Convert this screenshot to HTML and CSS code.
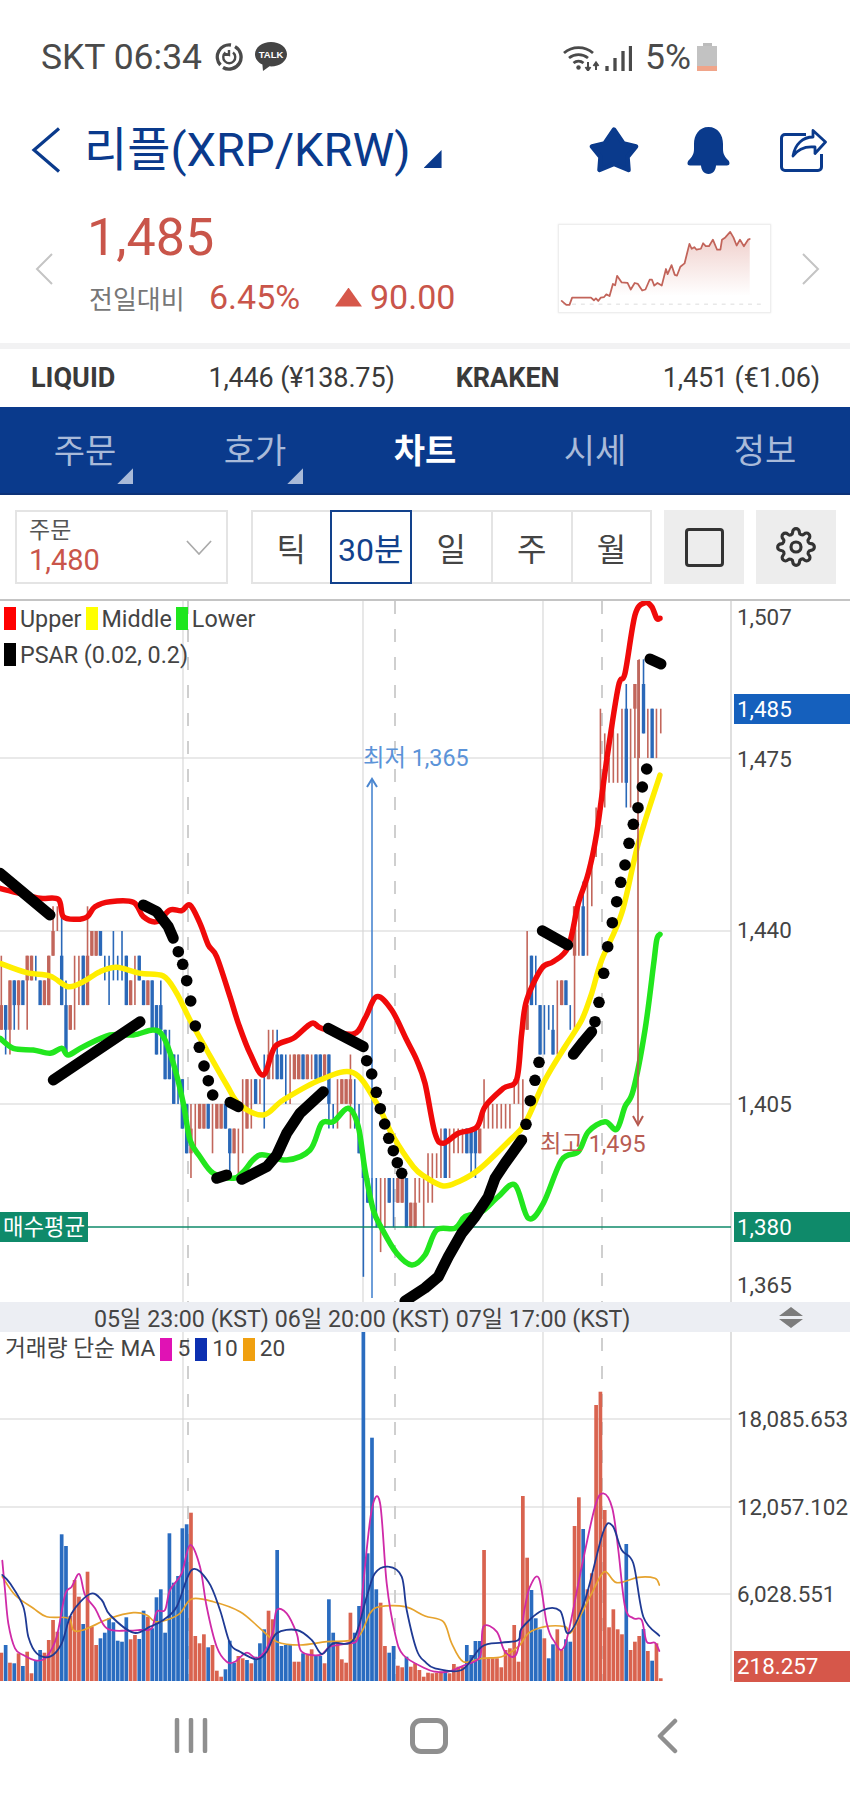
FILE: index.html
```html
<!DOCTYPE html>
<html lang="ko">
<head>
<meta charset="utf-8">
<title>리플(XRP/KRW)</title>
<link rel="stylesheet" href="styles.css">
</head>
<body>
<div class="status">
  <span class="status-text">SKT 06:34</span>
  <svg class="ic-sync" viewBox="0 0 28 28"><path d="M5.500 22A12 12 0 0 1 16 2M20 3.600A12 12 0 0 1 8 24.500M24 19.500" fill="none" stroke="#4a4a4a" stroke-width="3.400"/><path d="M10.500 9.500a6 6 0 1 0 7.500 0M9 10.500l5 1.500V7" fill="none" stroke="#4a4a4a" stroke-width="2.400"/></svg>
  <svg class="ic-talk" viewBox="0 0 32 30"><path d="M16 0C7.200 0 0 5.400 0 12.200c0 4.400 3 8.200 7.400 10.300L8 29l6.500-4.700c.5 0 1 .1 1.500.1 8.800 0 16-5.400 16-12.200S24.800 0 16 0z" fill="#444"/><text x="16" y="16" class="talk-text">TALK</text></svg>
  <span class="status-right">
    <svg class="ic-wifi" viewBox="0 0 38 27"><path d="M1 9a22 22 0 0 1 29 0M6 14a15 15 0 0 1 19 0M10.500 19a8 8 0 0 1 10 0" fill="none" stroke="#4a4a4a" stroke-width="2.800"/><circle cx="15.500" cy="23.500" r="2.200" fill="#4a4a4a"/><path d="M25 18v8M22.500 23l2.500 3.500 2.500-3.500M33 26v-7M30.500 22l2.500-3.500 2.500 3.500" fill="none" stroke="#4a4a4a" stroke-width="2"/></svg>
    <svg class="ic-signal" viewBox="0 0 27 26"><path d="M2 26v-5M10 26V13M18 26V6M25.500 26V1" stroke="#4a4a4a" stroke-width="3.300"/></svg>
    <span class="status-text">5%</span>
    <span class="battery"><span class="battery-cap"></span><span class="battery-body"><span class="battery-low"></span></span></span>
  </span>
</div>

<header class="head">
  <svg class="ic-back" viewBox="0 0 30 46"><path d="M28 1.500 3 23l25 21.500" fill="none" stroke="#0a3a8c" stroke-width="3.200"/></svg>
  <h1 class="title">리플(XRP/KRW)</h1>
  <span class="title-tri"></span>
  <span class="head-icons">
    <svg class="ic-star" viewBox="0 0 50 48"><path d="M25 3.500 34.500 17.500 47 20.500 38.500 31 39.500 44 25 38 10.500 44 11.500 31 3 20.500 15.500 17.500z" fill="#0a3a8c" stroke="#0a3a8c" stroke-width="4.500" stroke-linejoin="round"/></svg>
    <svg class="ic-bell" viewBox="0 0 43 47"><path d="M21.500 0C12 0 7 8 7 17v5c0 5-2 8-5.500 11.500C0 35.500 0 38.500 3 38.500h37c3 0 3-3 1.500-5C38 30 36 27 36 22v-5C36 8 31 0 21.500 0z" fill="#0a3a8c"/><path d="M14 38h15c0 5-3 9-7.500 9S14 43 14 38z" fill="#0a3a8c"/></svg>
    <svg class="ic-share" viewBox="0 0 47 43"><path d="M26 5.500H5A3.500 3.500 0 0 0 1.500 9v29A3.500 3.500 0 0 0 5 41.500h33a3.500 3.500 0 0 0 3.500-3.500V25" fill="none" stroke="#0a3a8c" stroke-width="3"/><path d="M13 27C15 15 23 8 33 8V1.500L45.500 13 35 24.500V18C26 17 18 20 13 27z" fill="#fff" stroke="#0a3a8c" stroke-width="2.800" stroke-linejoin="round"/></svg>
  </span>
</header>

<section class="quote">
  <svg class="ic-chev" viewBox="0 0 18 32"><path d="M17 1 2 16l15 15" fill="none" stroke="#c4c4c4" stroke-width="2"/></svg>
  <div class="quote-main">
    <div class="price">1,485</div>
    <div class="change">
      <span class="change-label">전일대비</span>
      <span class="change-pct">6.45%</span>
      <span class="change-tri"></span>
      <span class="change-val">90.00</span>
    </div>
  </div>
  <svg class="spark" viewBox="0 0 213 89">
    <defs><linearGradient id="sparkfill" x1="0" y1="0" x2="0" y2="1"><stop offset="0" stop-color="#d9887e" stop-opacity=".42"/><stop offset="1" stop-color="#d9887e" stop-opacity="0"/></linearGradient></defs>
    <g id="spark"></g>
  </svg>
  <svg class="ic-chev" viewBox="0 0 18 32"><path d="M1 1l15 15L1 31" fill="none" stroke="#c4c4c4" stroke-width="2"/></svg>
</section>

<section class="exchanges">
  <b class="ex-name ex-liquid">LIQUID</b>
  <span class="ex-val ex-val1">1,446 (¥138.75)</span>
  <b class="ex-name ex-kraken">KRAKEN</b>
  <span class="ex-val ex-val2">1,451 (€1.06)</span>
</section>

<nav class="tabs">
  <span class="tab"><span class="tab-label">주문<i class="tab-tri"></i></span></span>
  <span class="tab"><span class="tab-label">호가<i class="tab-tri"></i></span></span>
  <span class="tab tab-on"><span class="tab-label">차트</span></span>
  <span class="tab"><span class="tab-label">시세</span></span>
  <span class="tab"><span class="tab-label">정보</span></span>
</nav>

<section class="toolbar">
  <div class="select">
    <div class="select-text"><span class="select-name">주문</span><span class="select-price">1,480</span></div>
    <svg class="ic-down" viewBox="0 0 28 16"><path d="M1 1l13 14L27 1" fill="none" stroke="#aaa" stroke-width="1.800"/></svg>
  </div>
  <div class="segments">
    <span class="seg seg-tick">틱</span>
    <span class="seg seg-on">30분</span>
    <span class="seg">일</span>
    <span class="seg">주</span>
    <span class="seg seg-last">월</span>
  </div>
  <span class="tool-btn"><span class="square"></span></span>
  <span class="tool-btn">
    <svg class="ic-gear" viewBox="0 0 24 24" fill="none" stroke="#333" stroke-width="1.900"><circle cx="12" cy="12" r="3"/><path d="M19.400 15a1.650 1.650 0 0 0 .33 1.820l.06.06a2 2 0 0 1 0 2.830 2 2 0 0 1-2.830 0l-.06-.06a1.650 1.650 0 0 0-1.820-.33 1.650 1.650 0 0 0-1 1.510V21a2 2 0 0 1-2 2 2 2 0 0 1-2-2v-.09A1.650 1.650 0 0 0 9 19.400a1.650 1.650 0 0 0-1.820.33l-.06.06a2 2 0 0 1-2.830 0 2 2 0 0 1 0-2.830l.06-.06a1.650 1.650 0 0 0 .33-1.820 1.650 1.650 0 0 0-1.510-1H3a2 2 0 0 1-2-2 2 2 0 0 1 2-2h.09A1.650 1.650 0 0 0 4.600 9a1.650 1.650 0 0 0-.33-1.820l-.06-.06a2 2 0 0 1 0-2.830 2 2 0 0 1 2.830 0l.06.06a1.650 1.650 0 0 0 1.820.33H9a1.650 1.650 0 0 0 1-1.510V3a2 2 0 0 1 2-2 2 2 0 0 1 2 2v.09a1.650 1.650 0 0 0 1 1.510 1.650 1.650 0 0 0 1.820-.33l.06-.06a2 2 0 0 1 2.830 0 2 2 0 0 1 0 2.830l-.06.06a1.650 1.650 0 0 0-.33 1.820V9a1.650 1.650 0 0 0 1.510 1H21a2 2 0 0 1 2 2 2 2 0 0 1-2 2h-.09a1.650 1.650 0 0 0-1.510 1z"/></svg>
  </span>
</section>

<section class="panel panel-main">
  <div class="legend">
    <div class="legend-row"><i class="sw sw-red"></i>Upper<i class="sw sw-yellow"></i>Middle<i class="sw sw-green"></i>Lower</div>
    <div class="legend-row"><i class="sw sw-black"></i>PSAR (0.02, 0.2)</div>
  </div>
  <svg id="main" class="chart-main" viewBox="0 601 850 701">
    <g id="main-grid"></g>
    <g id="candles"></g>
    <g id="low-arrow"><path d="M372 1298V779" stroke="#4a86d0" stroke-width="1.600" fill="none"/><path d="M367 787l5-8 5 8" stroke="#4a86d0" stroke-width="2" fill="none"/></g>
    <path d="M88 1227H731" stroke="#0f8a6a" stroke-width="1.500"/>
    <g id="bands"></g>
    <path d="M638 660V1124" stroke="#b5584e" stroke-width="1.600" fill="none"/><path d="M633 1116l5 9 5-9" stroke="#b5584e" stroke-width="2" fill="none"/>
    <g id="psar"></g>
    <rect x="734" y="694" width="116" height="30" fill="#1560bd"/>
    <rect x="734" y="1212" width="116" height="30" fill="#0f8a6a"/>
    <rect x="0" y="1212" width="88" height="30" fill="#0f8a6a"/>
    <text class="ax" x="737" y="625">1,507</text>
    <text class="ax ax-w" x="737" y="717">1,485</text>
    <text class="ax" x="737" y="767">1,475</text>
    <text class="ax" x="737" y="938">1,440</text>
    <text class="ax" x="737" y="1112">1,405</text>
    <text class="ax ax-w" x="737" y="1235">1,380</text>
    <text class="ax" x="737" y="1293">1,365</text>
    <text class="avg" x="3" y="1235">매수평균</text>
    <text class="note note-low" x="363" y="766">최저 1,365</text>
    <text class="note note-high" x="540" y="1152">최고 1,495</text>
  </svg>
</section>

<div class="timebar">
  <span class="time">05일 23:00 (KST)</span>
  <span class="time">06일 20:00 (KST)</span>
  <span class="time">07일 17:00 (KST)</span>
  <svg class="ic-updown" viewBox="0 0 24 21"><path d="M12 0l12 9H0zM12 21L0 12h24z" fill="#7c7c7c"/></svg>
</div>

<section class="panel panel-vol">
  <div class="vol-legend">거래량 단순 MA<i class="sw sw-mag"></i>5<i class="sw sw-navy"></i>10<i class="sw sw-orange"></i>20</div>
  <svg id="vol" class="chart-vol" viewBox="0 1332 850 350">
    <g id="vol-grid"></g>
    <g id="bars"></g>
    <g id="vol-lines"></g>
    <rect x="734" y="1651" width="116" height="31" fill="#d6574a"/>
    <text class="ax" x="737" y="1427">18,085.653</text>
    <text class="ax" x="737" y="1515">12,057.102</text>
    <text class="ax" x="737" y="1602">6,028.551</text>
    <text class="ax ax-w" x="737" y="1674">218.257</text>
  </svg>
</section>

<footer class="navbar">
  <svg class="nav-recent" viewBox="0 0 34 35"><path d="M3 2v31M17 2v31M31 2v31" stroke="#8f8f8f" stroke-width="4.500" stroke-linecap="round"/></svg>
  <span class="nav-home"></span>
  <svg class="nav-back" viewBox="0 0 22 36"><path d="M19 3 4 18l15 15" fill="none" stroke="#8f8f8f" stroke-width="4.500" stroke-linecap="round" stroke-linejoin="round"/></svg>
</footer>
<script src="chart.js"></script>
</body>
</html>
```
FILE: styles.css
```css
* { box-sizing: border-box; }
html, body { margin: 0; padding: 0; background: #fff; }
body { width: 850px; height: 1795px; overflow: hidden; font-family: Roboto, "Noto Sans CJK KR", sans-serif; color: #444; }
i { display: block; font-style: normal; }

.status { height: 114px; display: flex; align-items: center; padding: 0 20px 0 41px; color: #4a4a4a; }
.status-text { font-size: 35.500px; line-height: 40px; }
.ic-sync { width: 28px; height: 28px; margin-left: 13px; }
.ic-talk { width: 32px; height: 30px; margin-left: 12px; }
.talk-text { font: 700 9.500px "Liberation Sans", sans-serif; fill: #fff; text-anchor: middle; }
.status-right { margin-left: auto; display: flex; align-items: center; padding-right: 113px; }
.ic-wifi { width: 38px; height: 27px; }
.ic-signal { width: 27px; height: 26px; margin: 2px 13px 0 4px; }
.battery { width: 20px; height: 28px; margin-left: 6px; display: flex; flex-direction: column; align-items: center; }
.battery-cap { width: 9px; height: 3px; background: #bcbcbc; }
.battery-body { width: 20px; flex: 1; background: #c2c2c2; display: flex; align-items: flex-end; }
.battery-low { width: 100%; height: 5px; background: #f0a58a; }

.head { height: 72px; display: flex; align-items: center; padding-left: 31px; position: relative; }
.ic-back { width: 30px; height: 46px; }
.title { margin: 0 0 0 23px; font-size: 47px; line-height: 50px; font-weight: 400; color: #0a3a8c; }
.title-tri { width: 18px; height: 18px; margin: 18px 0 0 13px; background: #0a3a8c; clip-path: polygon(100% 0, 100% 100%, 0 100%); }
.head-icons { margin-left: auto; display: flex; align-items: center; padding-right: 23px; }
.ic-star { width: 50px; height: 48px; }
.ic-bell { width: 43px; height: 47px; margin-left: 48px; }
.ic-share { width: 47px; height: 43px; margin-left: 50px; }

.quote { height: 157px; display: flex; align-items: flex-start; padding: 21px 30px 0 35px; position: relative; }
.quote .ic-chev { width: 18px; height: 32px; margin-top: 46px; flex: none; }
.quote-main { width: 505px; padding-left: 34px; flex: none; }
.price { font-size: 52px; line-height: 62px; color: #c9554a; }
.change { display: flex; align-items: center; height: 40px; margin: 8px 0 0 2px; }
.change-label { font-size: 26px; color: #777; width: 120px; }
.change-pct { font-size: 34px; color: #c9554a; width: 126px; }
.change-tri { width: 27px; height: 19px; background: #d6574a; clip-path: polygon(50% 0, 100% 100%, 0 100%); }
.change-val { font-size: 34px; color: #c9554a; margin-left: 8px; }
.spark { width: 213px; height: 89px; margin: 17px 31px 0 0; border: 1px solid #eee; box-shadow: 0 0 2px #e8e8e8; flex: none; }

.exchanges { height: 64px; border-top: 6px solid #f2f2f3; display: flex; align-items: center; font-size: 27px; color: #3a3a3a; }
.ex-name { font-weight: 700; }
.ex-liquid { margin-left: 31px; }
.ex-val { letter-spacing: -.15px; }
.ex-val1 { margin-left: 93px; }
.ex-kraken { margin-left: 61px; }
.ex-val2 { margin-left: auto; margin-right: 30px; }

.tabs { height: 88px; padding-top: 2px; background: #0a3a8c; display: grid; grid-template-columns: repeat(5, 170px); align-items: center; border-bottom: 2px solid #0c3278; }
.tab { text-align: center; font-size: 34px; color: #a9bad9; }
.tab-label { position: relative; display: inline-block; line-height: 44px; }
.tab-on { color: #fff; font-weight: 700; }
.tab-tri { position: absolute; right: -17px; bottom: -11px; width: 16px; height: 16px; background: #a9bad9; clip-path: polygon(100% 0, 100% 100%, 0 100%); }

.toolbar { height: 104px; padding: 15px 14px; display: flex; }
.select { width: 213px; height: 74px; margin-left: 1px; border: 2px solid #e4e4e4; display: flex; align-items: center; justify-content: space-between; padding: 0 14px 0 12px; }
.select-text { display: flex; flex-direction: column; }
.select-name { font-size: 23px; line-height: 26px; color: #555; }
.select-price { font-size: 29px; line-height: 33px; color: #c9554a; }
.ic-down { width: 26px; height: 15px; }
.segments { width: 402px; height: 74px; margin-left: 23px; border: 2px solid #e4e4e4; display: grid; grid-template-columns: 77px 82px 79px 80px 1fr; font-size: 32px; }
.seg { display: flex; align-items: center; justify-content: center; border-left: 2px solid #e4e4e4; color: #444; white-space: nowrap; }
.seg-tick { border-left: 0; }
.seg-on { margin: -2px 0; border: 2px solid #12418c; color: #12418c; }
.seg-on + .seg { border-left: 0; }
.tool-btn { width: 80px; height: 74px; margin-left: 12px; background: #ededed; display: flex; align-items: center; justify-content: center; }
.square { width: 39px; height: 39px; border: 3px solid #333; border-radius: 4px; }
.ic-gear { width: 40px; height: 40px; }

.panel { position: relative; }
.panel-main { border-top: 2px solid #c4c4c4; height: 703px; }
.chart-main { display: block; width: 850px; height: 701px; }
.legend { position: absolute; left: 4px; top: 6px; font-size: 23.300px; line-height: 24px; color: #444; }
.legend-row { display: flex; height: 36px; align-items: flex-start; }
.sw { width: 12px; height: 23px; margin-right: 4px; }
.sw-red { background: #f00; }
.sw-yellow { background: #ff0; margin-left: 4px; }
.sw-green { background: #1ee61e; margin-left: 4px; }
.sw-black { background: #000; }
.ax { font: 22.400px Roboto, sans-serif; fill: #444; }
.ax-w { fill: #fff; }
.avg { font: 22.300px "Noto Sans CJK KR", sans-serif; fill: #fff; }
.note { font: 23.300px Roboto, "Noto Sans CJK KR", sans-serif; }
.note-low { fill: #5b93d8; }
.note-high { fill: #b85c52; }

.timebar { height: 30px; background: #eceef3; display: flex; align-items: center; padding: 0 47px 0 94px; font-size: 23.200px; color: #444; position: relative; }
.time { margin-right: 6px; white-space: nowrap; }
.ic-updown { width: 24px; height: 21px; margin-left: auto; }

.panel-vol { height: 350px; }
.chart-vol { display: block; width: 850px; height: 350px; }
.vol-legend { position: absolute; left: 5px; top: 5px; z-index: 1; display: flex; align-items: center; font-size: 22.700px; line-height: 24px; color: #444; white-space: nowrap; }
.vol-legend .sw { margin: 0 5px; width: 12px; }
.sw-mag { background: #e012b4; }
.sw-navy { background: #0c2fb0; }
.sw-orange { background: #f0a010; }

.navbar { height: 113px; display: flex; align-items: flex-start; padding-top: 36px; position: relative; }
.nav-recent { width: 34px; height: 35px; margin-left: 174px; }
.nav-home { width: 38px; height: 36px; margin-left: 202px; border: 5px solid #8f8f8f; border-radius: 11px; }
.nav-back { width: 22px; height: 36px; margin-left: 208px; }
```
FILE: chart.js
```js
const NS = "http://www.w3.org/2000/svg";
function add(parent, tag, attrs) {
  const el = document.createElementNS(NS, tag);
  for (const k in attrs) el.setAttribute(k, attrs[k]);
  document.getElementById(parent).appendChild(el);
  return el;
}
// Points traced in 3x crops: [x, y] pairs, mapped by crop origin.
function mapPts(flat, ox, oy) {
  const out = [];
  for (let i = 0; i < flat.length; i += 2) out.push([ox + flat[i] / 3, oy + flat[i + 1] / 3]);
  return out;
}
const ptsAttr = pts => pts.map(p => p[0].toFixed(1) + "," + p[1].toFixed(1)).join(" ");
function line(parent, pts, color, width) {
  add(parent, "polyline", {
    points: ptsAttr(pts), fill: "none", stroke: color, "stroke-width": width,
    "stroke-linecap": "round", "stroke-linejoin": "round"
  });
}
// Smooth curve through the points (Catmull-Rom to cubic Bezier).
function curve(parent, pts, color, width) {
  const f = n => n.toFixed(1);
  let d = `M${f(pts[0][0])} ${f(pts[0][1])}`;
  for (let i = 0; i < pts.length - 1; i++) {
    const p0 = pts[Math.max(i - 1, 0)], p1 = pts[i], p2 = pts[i + 1], p3 = pts[Math.min(i + 2, pts.length - 1)];
    d += `C${f(p1[0] + (p2[0] - p0[0]) / 6)} ${f(p1[1] + (p2[1] - p0[1]) / 6)} ${f(p2[0] - (p3[0] - p1[0]) / 6)} ${f(p2[1] - (p3[1] - p1[1]) / 6)} ${f(p2[0])} ${f(p2[1])}`;
  }
  add(parent, "path", { d, fill: "none", stroke: color, "stroke-width": width, "stroke-linecap": "round", "stroke-linejoin": "round" });
}

// Sparkline
const spark = mapPts([28,260,42,272,52,272,60,250,118,250,127,258,133,252,140,260,148,250,158,248,165,240,175,245,185,208,192,212,198,183,212,203,230,205,240,225,252,205,262,208,275,228,285,225,298,195,305,195,312,213,322,205,335,213,348,162,353,178,365,150,375,180,382,182,392,155,405,145,420,85,427,100,435,95,442,103,455,100,462,83,470,92,480,92,492,72,505,103,515,103,520,72,530,65,545,48,555,65,565,90,575,72,587,92,600,72,605,70], -8, -9);
add("spark", "polygon", { points: ptsAttr(spark.slice(10)) + " 193.700,72 47,72", fill: "url(#sparkfill)" });
add("spark", "path", { d: "M3 81H210", stroke: "#e8e8e8", "stroke-width": 1.5, "stroke-dasharray": "4 5" });
line("spark", spark, "#c2645a", 1.8);

// Grid
const AXIS = 731, GRID = "#e2e2e2";
[758, 931, 1104].forEach(y => add("main-grid", "path", { d: `M0 ${y}H${AXIS}`, stroke: GRID, "stroke-width": 1.5 }));
[183, 363, 543].forEach(x => add("main-grid", "path", { d: `M${x} 601V1302`, stroke: "#d8d8d8", "stroke-width": 1.2 }));
[188, 395, 602].forEach(x => add("main-grid", "path", { d: `M${x} 601V1302`, stroke: "#cfcfcf", "stroke-width": 2, "stroke-dasharray": "13 15" }));
add("main-grid", "path", { d: `M${AXIS} 601V1302`, stroke: "#d4d4d4", "stroke-width": 1.5 });
[1419, 1507, 1594].forEach(y => add("vol-grid", "path", { d: `M0 ${y}H${AXIS}`, stroke: GRID, "stroke-width": 1.5 }));
[183, 363, 543].forEach(x => add("vol-grid", "path", { d: `M${x} 1332V1681`, stroke: "#d8d8d8", "stroke-width": 1.2 }));
[188, 395, 602].forEach(x => add("vol-grid", "path", { d: `M${x} 1338V1681`, stroke: "#cfcfcf", "stroke-width": 2, "stroke-dasharray": "13 15" }));
add("vol-grid", "path", { d: `M${AXIS} 1332V1681`, stroke: "#d4d4d4", "stroke-width": 1.5 });

// Candles: colour (1 red, 0 blue), wick top, body top, body bottom, wick bottom, in 5-won ticks below 1,440.
const C = [
[1,1,3,4,4],[0,3,3,4,5],[1,2,2,4,5],[0,2,2,3,4],[1,2,2,3,4],[0,2,2,3,3],[1,1,1,2,4],[1,1,1,2,2],[0,1,1,1,2],[0,2,2,3,3],
[1,2,2,3,3],[1,1,1,3,3],[1,-1,0,1,1],[1,-1,-1,-1,0],[0,-1,1,3,3],[0,2,3,5,5],[1,3,3,4,4],[1,1,1,1,4],[1,1,1,1,3],[0,1,1,3,3],
[1,-1,1,3,3],[1,0,0,1,1],[1,0,0,1,1],[0,0,0,1,1],[0,1,1,1,2],[0,1,1,1,3],[0,0,1,1,2],[0,1,1,1,2],[0,0,1,1,2],[0,1,1,3,3],
[1,2,2,3,3],[1,1,1,1,3],[0,1,1,2,2],[0,2,2,3,3],[1,2,2,3,3],[0,2,2,4,4],[0,3,3,5,5],[0,2,3,4,5],[0,4,4,6,6],[0,4,5,6,6],
[0,5,5,7,7],[0,5,6,6,7],[0,6,6,8,8],[0,7,7,9,9],[1,7,8,9,10],[1,7,7,7,9],[1,7,7,8,8],[1,7,7,8,8],[0,7,7,8,8],[1,7,7,7,9],
[1,7,7,8,8],[1,7,7,8,8],[0,7,7,8,8],[0,8,8,9,10],[1,8,8,9,9],[1,8,9,9,10],[1,6,6,6,9],[1,6,6,8,8],[1,6,6,6,8],[0,6,6,7,7],
[1,6,6,6,7],[0,5,6,6,8],[1,4,5,6,6],[1,4,5,5,6],[0,4,5,6,6],[0,5,5,6,6],[0,5,5,5,7],[1,5,5,5,7],[1,5,5,6,6],[1,5,5,6,6],
[0,5,5,6,6],[1,5,5,6,6],[1,5,5,5,6],[0,5,5,6,6],[0,5,5,6,6],[1,5,5,6,6],[0,5,5,7,8],[0,7,7,7,8],[1,6,6,6,8],[1,6,6,7,7],
[1,6,6,7,7],[1,5,6,7,8],[0,6,6,6,8],[0,7,8,9,9],[0,9,9,10,14],[0,10,10,11,11],[0,10,10,10,12],[0,10,10,10,12],[1,10,10,10,13],[1,10,10,10,12],
[0,10,10,11,11],[0,10,10,10,12],[1,10,10,11,11],[1,10,10,11,11],[0,10,10,12,12],[1,11,11,12,12],[1,10,11,12,12],[1,10,10,10,11],[1,10,10,10,12],[1,9,9,9,11],
[1,9,9,9,11],[1,9,9,9,10],[1,8,8,8,10],[0,8,8,10,10],[1,8,8,8,10],[1,8,8,8,9],[1,8,8,8,9],[1,8,8,8,9],[0,8,8,9,9],[0,8,8,9,10],
[0,8,8,9,10],[1,8,8,9,9],[1,6,7,7,8],[1,7,7,7,8],[1,7,7,7,8],[1,7,7,7,8],[1,7,7,7,8],[1,7,7,7,8],[1,7,7,7,8],[1,6,6,6,7],
[1,6,6,6,7],[1,6,6,6,8],[1,0,3,4,4],[0,1,1,3,3],[0,1,1,1,3],[0,3,3,5,5],[0,3,3,3,5],[0,3,3,3,4],[0,3,4,5,5],[1,2,2,2,5],
[1,2,2,3,3],[0,2,2,3,3],[0,3,3,3,4],[1,-1,-1,1,4],[1,-1,-1,-1,1],[0,-2,-1,1,1],[1,-2,-1,-1,1],[1,-3,-2,-2,-1],[1,-5,-4,-4,-3],[1,-9,-6,-6,-5],
[1,-8,-7,-7,-5],[1,-7,-7,-7,-6],[1,-9,-8,-8,-6],[1,-8,-8,-8,-6],[1,-9,-9,-9,-6],[0,-10,-9,-6,-5],[1,-9,-9,-9,-5],[1,-10,-10,-9,-7],[1,-11,-10,-10,-7],[0,-11,-10,-8,-8],
[1,-9,-9,-9,-7],[0,-9,-9,-7,-7],[1,-9,-9,-9,-7],[1,-9,-9,-9,-8]
];
const X = i => 1.33 + 4.31 * i;
const Y = n => 931 + n * 24.7;
const RED = "#c2665b", BLUE = "#2a68b8";
C.forEach((c, i) => {
  const col = c[0] ? RED : BLUE, x = X(i);
  add("candles", "path", { d: `M${x.toFixed(2)} ${Y(c[1]).toFixed(1)}V${Y(c[4]).toFixed(1)}`, stroke: col, "stroke-width": 1.6 });
  if (c[3] > c[2]) add("candles", "rect", { x: (x - 1.7).toFixed(2), y: Y(c[2]).toFixed(1), width: 3.4, height: ((c[3] - c[2]) * 24.7).toFixed(1), fill: col });
});

// Bollinger bands
const upper = [].concat(
  mapPts([0,115,60,130,120,145,175,148,190,200,230,208,262,200,285,170,330,155,400,157,430,200,470,215,510,180,545,182,570,165,600,220,625,285,650,320,690,440,715,520,750,610,790,675,825,590,880,565,935,520,965,535,1060,552,1095,505,1130,440,1175,480,1220,570,1250,630,1275,700], 0, 850),
  mapPts([30,400,55,430,100,400,155,382,180,320,235,265,275,238], 425, 1000),
  mapPts([290,1300,305,1200,350,1105,385,1085,430,1040,460,910,490,820,515,700,545,480,580,260,600,220,630,45,660,8,680,20,695,55,705,55], 425, 600));
const middle = [].concat(
  mapPts([0,340,80,368,150,378,205,410,250,395,300,365,350,352,420,370,490,378,530,430,570,510,620,600,680,705,720,765,790,795,850,750,960,690,1060,668,1130,760,1180,860,1240,950,1275,980], 0, 850),
  mapPts([55,558,100,545,160,510,250,425,300,370], 425, 1000),
  mapPts([360,1440,420,1340,470,1260,500,1180,530,1080,590,940,640,730,705,525], 425, 600));
const lower = [].concat(
  mapPts([0,565,40,595,100,600,150,610,185,595,205,615,250,590,330,555,400,555,460,540,490,560,520,640,550,760,570,870,600,920,640,970,700,985,730,965,780,915,860,930,930,900,965,820,1000,815,1045,775,1075,830,1095,960,1120,1080,1145,1135,1190,1210,1235,1245,1275,1215], 0, 850),
  mapPts([35,690,90,685,120,650,170,635,220,590,270,555,310,655,355,610,410,480,460,455,490,395,540,365,575,388,600,320,625,270], 425, 1000),
  mapPts([660,1290,685,1100,695,1020,705,1003], 425, 600));
curve("bands", middle, "#ffee00", 5.5);
curve("bands", lower, "#22e61e", 5.5);
curve("bands", upper, "#f00a0a", 5.5);

// Parabolic SAR
const segs = [
  mapPts([0,70,150,195], 0, 850), mapPts([160,690,420,515], 0, 850),
  mapPts([430,165,470,185,505,230,520,265], 0, 850), mapPts([650,985,680,975], 0, 850),
  mapPts([690,757,715,770], 0, 850), mapPts([725,988,800,950,830,915,860,850,900,790,970,725], 0, 850),
  mapPts([985,535,1090,590], 0, 850),
  [[405,1301],[425,1288]].concat(mapPts([40,830,70,770,110,700,150,650,190,590,210,535,240,490,290,420], 425, 1000)),
  mapPts([445,163,475,125,500,95], 425, 1000), mapPts([352,992,428,1035], 425, 600), mapPts([675,177,708,192], 425, 600)
];
segs.forEach(s => line("psar", s, "#000", 11));
const dots = [].concat(
  mapPts([535,305,548,343,560,392,572,453,586,528,598,592,612,648,625,692,638,735,1100,632,1115,672,1129,727,1141,776,1154,822,1166,865,1180,902,1192,938,1205,970], 0, 850),
  mapPts([303,373,316,302,330,241,342,187,510,65], 425, 1000),
  mapPts([522,1207,536,1120,548,1040,562,968,575,905,587,847,600,795,612,730,625,673,639,623,652,561,665,507], 425, 600));
dots.forEach(p => add("psar", "circle", { cx: p[0].toFixed(1), cy: p[1].toFixed(1), r: 5.8, fill: "#000" }));

// Volume bars: top in the 3x crop (y origin 1290); r marks red bars.
const V = "r1088 b1065 r1118 b1120 r1090 b1128 r1085 r1150 b1110 b1080 r1088 r1050 r990 r1025 b733 b768 r978 r870 r920 b1002 r845 r1010 r1065 b1045 b1028 b985 b997 b1052 b1055 b982 r1048 r1035 b1047 b962 r980 b1015 b922 b898 b1028 b730 b878 b858 b715 b703 r668 r1038 r1060 r1033 b1072 r1065 r1142 r1160 b1138 b1052 b1118 r1098 r1105 b1110 r1120 b1100 b1060 b1018 r962 r988 b780 b1068 b1065 b1062 r1115 r1115 b1090 r1095 r1078 b1098 b1098 r1120 b928 b1028 r1055 r1108 r1118 r968 b1028 b948 b125 b790 b443 b898 r938 r1068 b1088 b1068 r1127 r1132 b1100 r1130 r1120 r1140 r1160 r1148 r1150 r1148 r1145 b1142 r1150 r1122 r1130 r1130 b1065 b1095 b1053 b1053 r780 r1105 r1105 r1105 r1132 r1080 r1075 r1005 r1115 r618 r803 b900 b985 b1018 r1045 b1105 b1063 r1018 r1080 b1048 b1055 r708 r622 b717 r898 r850 r345 r305 r660 r1012 r958 r1018 r1033 b762 r1080 r1055 r1038 b1017 r1083 b1112 r1060 r1165".split(" ");
V.forEach((v, i) => {
  const top = 1290 + Number(v.slice(1)) / 3;
  add("bars", "rect", { x: (X(i) - 1.85).toFixed(2), y: top.toFixed(1), width: 3.7, height: (1681 - top).toFixed(1), fill: v[0] === "r" ? "#d9634f" : "#2a6cc0" });
});

// Volume moving averages
const mag = [].concat(
  mapPts([7,812,15,900,25,1000,45,1075,70,1095,110,1112,140,1100,170,1040,195,915,215,890,238,852,255,915,285,955,320,1015,380,1022,420,1020,455,1015,470,965,495,960,510,900,545,850,570,765,600,830,620,950,650,1070,680,1115,705,1115,740,1088,770,1105,800,1075,820,1020,830,960,860,970,890,1030,905,1085,960,1095,990,1070,1040,1060,1075,1040,1090,880,1115,660,1140,638,1160,880,1185,1030,1210,1095,1275,1135], 0, 1290),
  mapPts([30,1145,70,1145,120,1125,165,1100,175,1010,215,1025,240,1085,275,1090,300,950,315,890,342,865,365,1000,385,1050,420,1065,470,830,510,650,535,610,562,655,580,780,600,950,625,985,650,990,665,1055,690,1058,703,1083], 425, 1290));
const navy = [].concat(
  mapPts([7,855,30,880,70,950,85,1040,110,1090,150,1100,185,1060,215,970,270,912,305,930,330,975,400,1028,450,1010,490,990,530,950,575,840,625,875,660,960,690,1060,720,1085,770,1108,800,1085,830,1030,890,1020,935,1050,965,1092,1000,1060,1060,1050,1100,920,1125,850,1165,830,1205,860,1220,960,1250,1080,1275,1115], 0, 1290),
  mapPts([30,1135,110,1140,170,1070,230,1058,280,1050,290,1015,350,962,405,962,430,1030,480,930,535,725,563,708,590,780,625,820,655,980,703,1037], 425, 1290));
const orange = [].concat(
  mapPts([7,860,45,915,100,955,140,980,205,985,220,1020,250,1020,330,985,400,968,440,975,465,995,500,990,540,970,575,927,640,935,720,965,780,1015,830,1055,900,1065,980,1055,1070,1045,1110,970,1140,950,1215,950,1275,978], 0, 1290),
  mapPts([55,995,80,1060,115,1115,170,1105,230,1100,280,1070,310,1030,360,1010,420,1010,440,1025,500,910,538,845,575,878,640,862,690,865,703,885], 425, 1290));
curve("vol-lines", orange, "#e6a32e", 1.7);
curve("vol-lines", mag, "#cf2aa8", 1.8);
curve("vol-lines", navy, "#1f3a94", 1.8);
```
